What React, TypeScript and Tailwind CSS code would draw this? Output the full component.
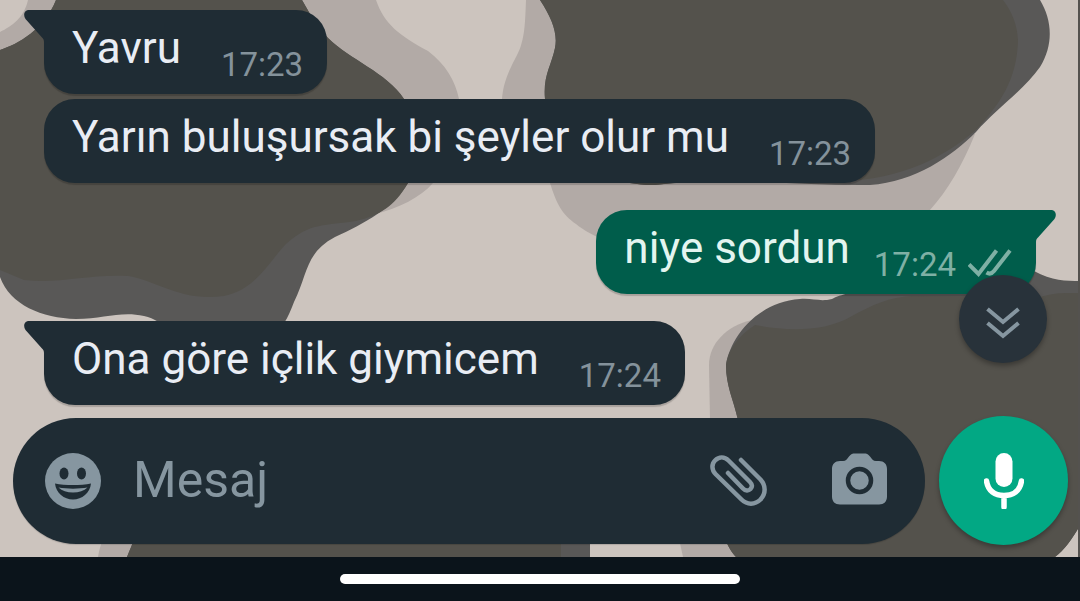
import { useState } from "react";

type Message = {
  id: number;
  text: string;
  time: string;
  outgoing: boolean;
  startsGroup: boolean;
};

const messages: Message[] = [
  { id: 1, text: "Yavru", time: "17:23", outgoing: false, startsGroup: true },
  { id: 2, text: "Yarın buluşursak bi şeyler olur mu", time: "17:23", outgoing: false, startsGroup: false },
  { id: 3, text: "niye sordun", time: "17:24", outgoing: true, startsGroup: true },
  { id: 4, text: "Ona göre içlik giymicem", time: "17:24", outgoing: false, startsGroup: true },
];

function Wallpaper() {
  return (
    <svg
      className="absolute inset-0 h-full w-full"
      viewBox="0 0 1080 557"
      preserveAspectRatio="none"
      aria-hidden="true"
    >
      <rect width="1080" height="557" fill="#ccc4be" />
      <g fill="#b2aaa6">
        <path d="M28 0C24 18 12 26 0 32V52L60 20V0Z" />
        <path d="M295 0H376C384 24 400 36 428 51C446 65 455 80 459 99C466 130 452 165 433 183C420 198 398 208 376 214L340 190Z" />
        <path d="M526 0C525 25 525 42 515 59C505 78 503 88 502 99C502 140 540 160 550 183C557 205 562 214 576 224C600 244 660 262 740 262C850 262 905 240 930 210C948 190 962 166 975 134L560 0Z" />
        <path d="M752 320C726 326 709 344 709 365L710 420L720 470H760Z" />
        <path d="M98 557C100 545 104 535 110 525H150L127 557Z" />
        <path d="M676 525L683 557H740L725 525Z" />
      </g>
      <g fill="#595857">
        <path d="M56 0H302C312 18 318 27 328 38C350 60 386 72 404 99C420 126 420 160 408 183C394 207 364 224 335 237C305 253 308 274 294 302C288 318 282 330 268 340H180C168 336 166 321 144 316C120 311 104 319 76 319C42 318 10 305 0 277V50C18 44 44 30 56 0Z" />
        <path d="M540 0C552 18 558 34 555 48C551 67 543 75 545 99C549 140 590 186 655 185C730 176 800 186 870 185C915 182 952 156 976 132C996 109 1024 90 1040 67C1054 44 1052 20 1040 0Z" />
        <path d="M800 299C813 298 820 302 832 299C850 290 880 286 1000 286L1034 271C1052 281 1066 281 1080 281V525C1072 540 1064 550 1055 557H736C729 549 725 542 720 520L738 420C733 398 726 386 726 365C728 346 750 303 800 299Z" />
        <path d="M140 525H590V557H127C132 545 134 540 140 525Z" />
      </g>
      <g fill="#54524c">
        <path d="M56 0H302C312 18 318 27 328 38C350 60 386 72 404 99C420 126 420 160 408 183C394 207 380 215 356 221C326 226 310 222 286 244C270 260 256 290 224 296C180 302 156 280 128 276C88 274 60 284 24 280L0 270V50C18 44 44 30 56 0Z" />
        <path d="M540 0C552 18 558 34 555 48C551 67 543 75 545 99C549 140 590 186 655 185C730 176 800 184 850 181C915 176 952 150 976 130C1000 104 1017 80 1018 40C1017 24 1012 12 1003 0Z" />
        <path d="M755 325C780 330 822 334 852 316C872 305 890 297 912 296L1040 297C1056 292 1066 293 1080 293V525C1072 540 1064 550 1055 557H736C729 549 725 542 720 520L738 420C733 398 726 386 726 365C728 350 738 336 755 325Z" />
        <path d="M140 525H561V557H127C132 545 134 540 140 525Z" />
      </g>
      <rect x="1078" width="2" height="557" fill="#54524f" />
    </svg>
  );
}

function Tail({ outgoing }: { outgoing: boolean }) {
  return (
    <svg
      className={
        outgoing
          ? "absolute top-0 -right-5 h-8 w-[21px] -scale-x-100 text-[#005d4b]"
          : "absolute top-0 -left-5 h-8 w-[21px] text-[#1f2c34]"
      }
      viewBox="0 0 21 32"
      fill="currentColor"
      aria-hidden="true"
    >
      <path d="M5 0H21V32H20C20 30 19.500 29 18 27.500L1.500 9C-1 5.500 0 0 5 0Z" />
    </svg>
  );
}

function ReadTicks() {
  return (
    <svg
      className="mb-2 ml-3 h-7 w-11 text-[#7fb0a5]"
      viewBox="0 0 44 28"
      fill="none"
      stroke="currentColor"
      strokeWidth="4"
      aria-hidden="true"
    >
      <path d="M1 15.500L10.500 25L28.500 1.500" />
      <path d="M18.500 23.500C21.500 25.500 24 24.500 26 22L42 1.500" />
    </svg>
  );
}

function Bubble({ message }: { message: Message }) {
  const { outgoing, startsGroup } = message;
  const shape = outgoing
    ? "rounded-l-[31px] rounded-br-[31px] bg-[#005d4b] text-[#e3f5f0]"
    : startsGroup
      ? "rounded-r-[31px] rounded-bl-[31px] bg-[#1f2c34] text-[#e9edf4]"
      : "rounded-[31px] bg-[#1f2c34] text-[#e9edf4]";
  return (
    <li className={`flex ${outgoing ? "justify-end" : "justify-start"} ${startsGroup ? "pt-[27px]" : "pt-[5px]"}`}>
      <div className={`relative flex items-end pt-2 pr-6 pb-[9px] pl-7 shadow-[0_2px_1px_rgba(0,0,0,0.18)] ${shape}`}>
        {startsGroup && <Tail outgoing={outgoing} />}
        <p className={`pb-[7px] text-[44px] leading-[60px] ${outgoing ? "mr-6" : "mr-10"}`}>{message.text}</p>
        <time className={`text-[33px] leading-10 ${outgoing ? "text-[#7fb0a5]" : "text-[#84929b]"}`}>
          {message.time}
        </time>
        {outgoing && <ReadTicks />}
      </div>
    </li>
  );
}

function EmojiIcon() {
  return (
    <svg className="size-14" viewBox="0 0 56 56" aria-hidden="true">
      <circle cx="28" cy="28" r="28" fill="#8696a0" />
      <g fill="#1f2c34">
        <ellipse cx="19" cy="20.500" rx="4.500" ry="6" />
        <ellipse cx="36.500" cy="20.500" rx="4.500" ry="6" />
        <path d="M10 30.500C20 32.500 36 32.500 46 30.500C45 40 37 46.500 28 46.500S11 40 10 30.500Z" />
      </g>
      <path d="M13.500 34.500C22 36 34 36 42.500 34.500C39 38 34 39.500 28 39.500S17 38 13.500 34.500Z" fill="#8696a0" />
    </svg>
  );
}

function ClipIcon() {
  return (
    <svg
      className="h-14 w-[58px]"
      viewBox="0 -2 58 56"
      fill="none"
      stroke="#8696a0"
      strokeWidth="4.500"
      strokeLinecap="round"
      strokeLinejoin="round"
      aria-hidden="true"
    >
      <path d="M31 5L50.500 24.500C56 30.500 56 38.500 50.500 44.500C45 50 37 50 31.500 44.500L5.500 19C1.500 15 1.500 9 5 5.500C9 1.500 14.500 1.500 18.500 5.500L40 27C42.500 29.500 42.500 32 40.500 34C38.500 36 35.500 36 33 33.500L18 18" />
    </svg>
  );
}

function CameraIcon() {
  return (
    <svg className="h-14 w-[55px]" viewBox="0 0 55 56" aria-hidden="true">
      <path
        d="M8 8H11C14 8 15 6 17 3.500C19 1 20.500 .5 23 .5H32C34.500 .5 36 1 38 3.500C40 6 41 8 44 8H47C52 8 55 11 55 16V43.500C55 48.500 52 51.500 47 51.500H8C3 51.500 0 48.500 0 43.500V16C0 11 3 8 8 8Z"
        fill="#8696a0"
      />
      <circle cx="27.500" cy="27.500" r="11.500" fill="none" stroke="#1f2c34" strokeWidth="4.500" />
    </svg>
  );
}

function MicIcon() {
  return (
    <svg className="h-14 w-10" viewBox="0 0 40 56" fill="none" aria-hidden="true">
      <rect x="11.500" width="17" height="34" rx="8.500" fill="#fff" />
      <path d="M2.500 28C4 38 11 42.500 20 42.500S36 38 37.500 28M20 43V54" stroke="#fff" strokeWidth="5.500" strokeLinecap="round" />
    </svg>
  );
}

export default function App() {
  const [draft, setDraft] = useState("");

  return (
    <div className="flex min-h-screen flex-col overflow-hidden bg-[#0b141b] font-[Roboto,sans-serif]">
      <main className="relative flex flex-1 flex-col overflow-hidden">
        <Wallpaper />
        <ol className="relative -mt-[17px] flex flex-1 flex-col px-11">
          {messages.map((message) => (
            <Bubble key={message.id} message={message} />
          ))}
        </ol>
        <form
          className="relative flex items-center gap-[14px] pt-[11px] pr-3 pb-3 pl-[13px]"
          onSubmit={(event) => event.preventDefault()}
        >
          <div className="flex h-[126px] min-w-0 flex-1 items-center rounded-full bg-[#1f2c34] pr-[38px] pl-8 shadow-[0_1px_1px_rgba(0,0,0,0.15)]">
            <button type="button" aria-label="Emoji">
              <EmojiIcon />
            </button>
            <input
              type="text"
              aria-label="Mesaj"
              placeholder="Mesaj"
              value={draft}
              onChange={(event) => setDraft(event.target.value)}
              className="ml-8 h-16 min-w-0 flex-1 bg-transparent text-[50px] text-[#e9edf4] outline-none placeholder:text-[#8696a0]"
            />
            <button type="button" aria-label="Dosya ekle">
              <ClipIcon />
            </button>
            <button type="button" aria-label="Kamera" className="ml-16">
              <CameraIcon />
            </button>
          </div>
          <button
            type="button"
            aria-label="Sesli mesaj"
            className="flex size-[129px] shrink-0 items-center justify-center rounded-full bg-[#02a884] shadow-[0_3px_5px_rgba(0,0,0,0.3)]"
          >
            <MicIcon />
          </button>
          <button
            type="button"
            aria-label="En alta in"
            className="absolute right-[33px] bottom-[194px] flex size-[88px] items-center justify-center rounded-full bg-[#28323a] pt-2 shadow-[0_3px_5px_rgba(0,0,0,0.3)]"
          >
            <svg
              className="h-8 w-9"
              viewBox="0 0 36 32"
              fill="none"
              stroke="#8696a0"
              strokeWidth="4"
              aria-hidden="true"
            >
              <path d="M2.500 2L18 15L33.500 2M2.500 16L18 29L33.500 16" />
            </svg>
          </button>
        </form>
      </main>
      <footer className="flex h-11 items-center justify-center">
        <div className="h-[10px] w-[37%] rounded-full bg-white" />
      </footer>
    </div>
  );
}
